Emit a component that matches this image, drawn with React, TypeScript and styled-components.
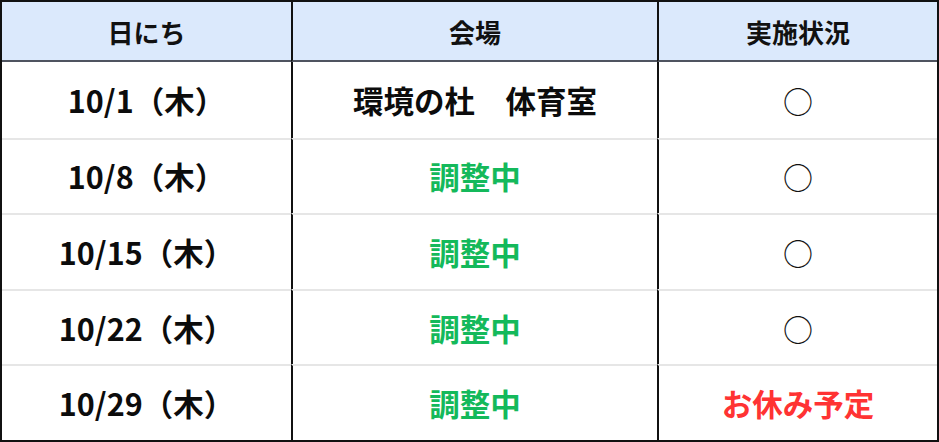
import * as React from 'react'
import styled, { createGlobalStyle } from 'styled-components'

const GlobalStyle = createGlobalStyle`
  html, body {
    margin: 0;
    padding: 0;
    background: #ffffff;
  }
  body {
    font-family: "Noto Sans CJK JP", "Noto Sans", sans-serif;
  }
`

// 表全体：外枠は黒の2px
const Board = styled.div`
  width: 939px;
  height: 442px;
  box-sizing: border-box;
  border: 2px solid #111111;
  display: grid;
  grid-template-columns: 289px 366px 1fr;
  grid-template-rows: 60px repeat(5, 1fr);
`

const HeadCell = styled.div`
  display: flex;
  align-items: center;
  justify-content: center;
  background: #dbe9fc;
  color: #111111;
  font-size: 26px;
  font-weight: 700;
  border-left: 2px solid #111111;
  border-bottom: 2px solid #4f5460;
  &:first-child {
    border-left: none;
  }
`

const Cell = styled.div<{ $first?: boolean; $top?: boolean; $tone?: 'green' | 'red' }>`
  display: flex;
  align-items: center;
  justify-content: center;
  font-size: 30.5px;
  font-weight: 700;
  color: ${(p) => (p.$tone === 'green' ? '#14b95b' : p.$tone === 'red' ? '#ff3333' : '#0c0c0c')};
  border-left: ${(p) => (p.$first ? 'none' : '2px solid #111111')};
  border-top: ${(p) => (p.$top ? '2px solid #e6e6e6' : 'none')};
`

const Maru = styled.span`
  font-weight: 400;
  font-size: 30px;
  color: #111111;
`

type Item = { date: string; place: string; status: string }

const items: Item[] = [
  { date: '10/1（木）', place: '環境の杜　体育室', status: '○' },
  { date: '10/8（木）', place: '調整中', status: '○' },
  { date: '10/15（木）', place: '調整中', status: '○' },
  { date: '10/22（木）', place: '調整中', status: '○' },
  { date: '10/29（木）', place: '調整中', status: 'お休み予定' },
]

export default function App() {
  return (
    <>
      <GlobalStyle />
      <Board>
        <HeadCell>日にち</HeadCell>
        <HeadCell>会場</HeadCell>
        <HeadCell>実施状況</HeadCell>
        {items.map((it, i) => (
          <React.Fragment key={it.date}>
            <Cell $first $top={i > 0}>{it.date}</Cell>
            <Cell $top={i > 0} $tone={it.place === '調整中' ? 'green' : undefined}>
              {it.place}
            </Cell>
            {it.status === '○' ? (
              <Cell $top={i > 0}>
                <Maru>○</Maru>
              </Cell>
            ) : (
              <Cell $top={i > 0} $tone="red">
                {it.status}
              </Cell>
            )}
          </React.Fragment>
        ))}
      </Board>
    </>
  )
}
